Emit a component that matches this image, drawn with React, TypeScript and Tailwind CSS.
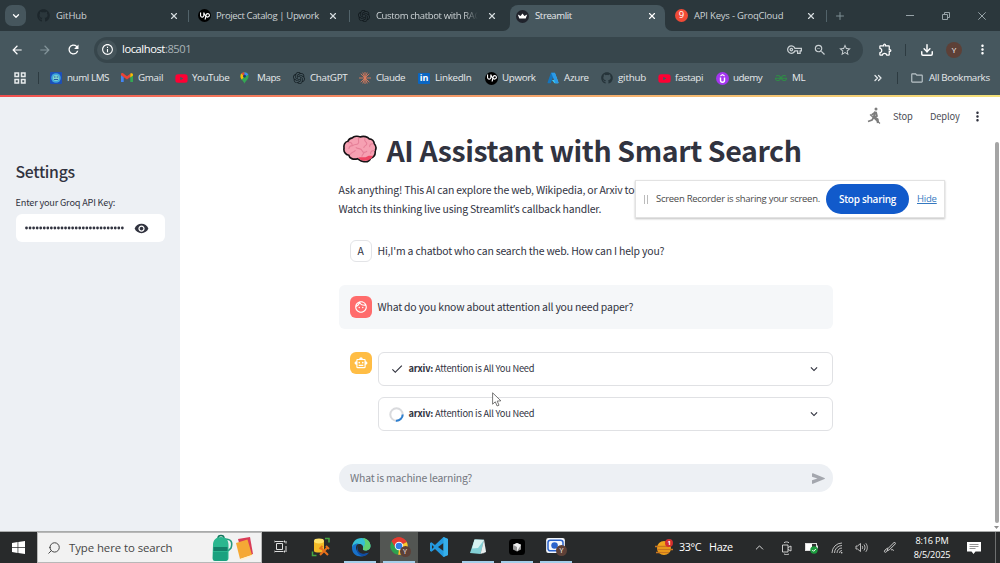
import type { ReactNode } from "react";
import { FaGithub, FaYoutube } from "react-icons/fa";
import {
  MdArrowBack,
  MdArrowForward,
  MdCheck,
  MdExpandMore,
  MdMoreVert,
  MdOutlineExtension,
  MdOutlineFace,
  MdOutlineFolder,
  MdOutlineInfo,
  MdOutlineSmartToy,
  MdOutlineVpnKey,
  MdRefresh,
  MdStarBorder,
  MdVisibility,
  MdZoomOut,
} from "react-icons/md";
import { SiGeeksforgeeks, SiOpenai, SiUpwork } from "react-icons/si";
import { ChevronDown, ChevronUp, ChevronsRight, Download, Plus, Search, X } from "lucide-react";

function UpworkIcon() {
  return (
    <span className="flex size-[13px] items-center justify-center rounded-full bg-black text-white">
      <SiUpwork size={10} />
    </span>
  );
}

function LinkedInIcon() {
  return (
    <span className="flex h-[11px] w-3 items-center justify-center rounded-[1px] bg-[#0a66c2] text-[9px] leading-none font-bold tracking-[-0.2px] text-white">
      <span className="-mt-px">in</span>
    </span>
  );
}

function StreamlitIcon() {
  return (
    <svg viewBox="0 0 13 13" className="size-[13px]">
      <circle cx="6.5" cy="6.5" r="6.5" fill="#20232c" />
      <path d="M1.8 4.6 4.6 6.1 6.5 3.4 8.4 6.1 11.2 4.6 9.7 8.6H3.3Z" fill="#fff" />
    </svg>
  );
}

function GroqIcon() {
  return (
    <span className="flex size-[13px] items-center justify-center rounded-full bg-[#f04a36] text-[9.500px] leading-none text-white">
      <span className="-mt-px">9</span>
    </span>
  );
}

function NumlIcon() {
  return (
    <svg viewBox="0 0 12 12" className="size-3">
      <rect width="12" height="12" rx="1" fill="#1d4fb8" />
      <circle cx="6" cy="6" r="4.8" fill="#3fa6dc" />
      <circle cx="6" cy="6" r="3" fill="#7fd3cf" />
      <path d="M4 5h1.5M6.7 5h1.5M4 7.5h4" stroke="#1c4c9c" strokeWidth="0.9" />
    </svg>
  );
}

function GmailIcon() {
  return (
    <svg viewBox="0 0 12 10" className="h-[10px] w-3">
      <path d="M0 1.5V9h2.7V4.2Z" fill="#4285f4" />
      <path d="M12 1.5V9H9.3V4.2Z" fill="#34a853" />
      <path d="M0 1.4C0 .2 1.4-.3 2.4.5L6 3.3 9.6.5v3.3L6 6.6 0 2.2Z" fill="#ea4335" />
      <path d="M9.4.6c1-.9 2.6-.3 2.6 1V2.4L9.3 4.4Z" fill="#fbbc04" />
    </svg>
  );
}

function MapsIcon() {
  return (
    <svg viewBox="0 0 10 13" className="h-3 w-[9px]">
      <path d="M5 13C4.3 10 .5 8.300.5 4.600A4.500 4.500 0 0 1 5 0a4.500 4.500 0 0 1 4.500 4.600C9.500 8.300 5.700 10 5 13Z" fill="#34a853" />
      <path d="M.5 4.600A4.500 4.500 0 0 1 1.600 1.600L5 4.600 2 8.200C1.100 7.200.5 6 .5 4.600Z" fill="#fbbc04" />
      <path d="M1.600 1.600A4.500 4.500 0 0 1 5 0L5 4.600Z" fill="#ea4335" />
      <path d="M5 0a4.500 4.500 0 0 1 4.300 3L5 5Z" fill="#4285f4" />
      <circle cx="5" cy="4.500" r="1.600" fill="#1f3f72" />
    </svg>
  );
}

function ClaudeIcon() {
  return (
    <svg viewBox="0 0 12 12" className="size-3" stroke="#dc7a5c" strokeWidth="0.900" strokeLinecap="round">
      <path d="M6 .4v11.200M.4 6h11.200M2 2l8 8M10 2l-8 8M3.900.9l4.200 10.200M8.100.9 3.900 11.100" />
    </svg>
  );
}

function AzureIcon() {
  return (
    <svg viewBox="0 0 12 12" className="size-3">
      <path d="M4 .8h3.600L3.800 11.200H1.200C.7 11.200.4 10.700.600 10.200Z" fill="#1475bd" />
      <path d="M7.800.8 11.400 10.200c.2.500-.1 1-.6 1H7.600L4.900 8h3Z" fill="#3ccbf4" />
      <path d="M4.200.8h3.700l3.500 9.400c.2.500-.1 1-.6 1H8.300Z" fill="#2b9ae8" />
    </svg>
  );
}

function UdemyIcon() {
  return (
    <svg viewBox="0 0 13 13" className="size-[13px]" fill="none" stroke="#fff">
      <circle cx="6.500" cy="6.500" r="6.500" fill="#a435f0" stroke="none" />
      <path d="M4.400 4 6.500 2.600 8.600 4" strokeWidth="1.100" />
      <path d="M4.500 5.400v2.900a2 2 0 0 0 4 0V5.400" strokeWidth="1.400" />
    </svg>
  );
}

function TabClose({ active = false }: { active?: boolean }) {
  return <X size={10} strokeWidth={2.800} className={active ? "text-white" : "text-[#d5dbde]"} />;
}

function Tab({ width, icon, title, titleClass = "" }: { width: string; icon: ReactNode; title: string; titleClass?: string }) {
  return (
    <div className={`flex h-full shrink-0 items-center ${width}`}>
      <span className="flex w-[19px] shrink-0 items-center">{icon}</span>
      <span className={`flex-1 pt-px whitespace-nowrap text-[#cdd3d6] ${titleClass}`}>{title}</span>
      <TabClose />
    </div>
  );
}

function TabStrip() {
  return (
    <div className="flex h-[31px] items-center bg-[#2b373c] text-[9.5px]">
      <button className="ml-[5px] flex size-[21px] shrink-0 items-center justify-center rounded-[7px] bg-[#46565d] text-white">
        <ChevronDown size={10} strokeWidth={3} />
      </button>
      <div className="w-[11px] shrink-0" />
      <Tab width="w-[142px]" icon={<FaGithub size={13} className="text-[#1d272c]" />} title="GitHub" titleClass="tracking-[-0.1px]" />
      <div className="mx-[9px] h-3 w-px shrink-0 bg-[#52636a]" />
      <Tab width="w-[140px]" icon={<UpworkIcon />} title="Project Catalog | Upwork" titleClass="-ml-px tracking-[-0.36px]" />
      <div className="mr-2 ml-[11px] h-3 w-px shrink-0 bg-[#52636a]" />
      <Tab
        width="w-[139px]"
        icon={<SiOpenai size={12} className="text-[#11191d]" />}
        title="Custom chatbot with RAG"
        titleClass="-ml-px mr-[5px] tracking-[-0.36px] [mask-image:linear-gradient(to_right,black_83%,transparent_96%)]"
      />
      <div className="relative ml-[13px] flex h-[26px] w-[155px] shrink-0 items-center self-end rounded-t-[8px] bg-[#46575e] pr-[8px] pb-[4px] pl-[6px]">
        <svg viewBox="0 0 7 7" className="absolute bottom-0 -left-[7px] size-[7px]" fill="#46575e">
          <path d="M7 0v7H0A7 7 0 0 0 7 0Z" />
        </svg>
        <svg viewBox="0 0 7 7" className="absolute -right-[7px] bottom-0 size-[7px]" fill="#46575e">
          <path d="M0 0v7h7A7 7 0 0 1 0 0Z" />
        </svg>
        <span className="flex w-[19px] items-center">
          <StreamlitIcon />
        </span>
        <span className="flex-1 pt-px tracking-[-0.36px] text-[#e6eaec]">Streamlit</span>
        <TabClose active />
      </div>
      <div className="w-[10px] shrink-0" />
      <Tab width="w-[141px]" icon={<GroqIcon />} title="API Keys - GroqCloud" titleClass="tracking-[-0.2px]" />
      <div className="ml-[10px] h-3 w-px shrink-0 bg-[#52636a]" />
      <Plus size={12} strokeWidth={1.9} className="ml-[7px] text-[#84939a]" />
      <div className="ml-auto flex items-center gap-[28px] pr-[14px] text-[#97a3a8]">
        <span className="h-px w-2 bg-[#97a3a8]" />
        <svg viewBox="0 0 8 8" className="size-2" fill="none" stroke="currentColor">
          <path d="M.5 2.500h5v5h-5zM2.500 2V.5h5v5H6" />
        </svg>
        <svg viewBox="0 0 8 8" className="size-2" stroke="currentColor">
          <path d="m.3.300 7.400 7.400M7.700.300.300 7.700" />
        </svg>
      </div>
    </div>
  );
}

function Toolbar() {
  return (
    <div className="flex h-[33px] items-center bg-[#46575e] pt-1 text-white">
      <MdArrowBack size={14} className="ml-[10px]" />
      <MdArrowForward size={14} className="ml-[14px] text-[#84959b]" />
      <MdRefresh size={15} className="ml-[14px]" />
      <div className="ml-[13px] flex h-[26px] w-[769px] items-center rounded-full bg-[#37464c] pr-[11px] pl-[3px]">
        <span className="flex size-5 items-center justify-center rounded-full bg-[#45545a]">
          <MdOutlineInfo size={13} />
        </span>
        <span className="ml-[5px] text-[11.200px] tracking-[-0.440px]">
          localhost<span className="text-[#a9b3b7]">:8501</span>
        </span>
        <MdOutlineVpnKey size={15} className="ml-auto text-[#c9d0d3]" />
        <MdZoomOut size={14} className="ml-[11px] text-[#c9d0d3]" />
        <MdStarBorder size={14} className="ml-[11px] text-[#c9d0d3]" />
      </div>
      <MdOutlineExtension size={15} className="ml-[15px]" />
      <div className="ml-[12px] h-3 w-px bg-[#2d3b41]" />
      <Download size={14} strokeWidth={2.500} className="ml-[14px]" />
      <span className="ml-[12px] flex size-4 items-center justify-center rounded-full bg-[#5d4037] text-[8px]">Y</span>
      <MdMoreVert size={15} className="ml-[13px]" />
    </div>
  );
}

const bookmarks: { width: string; icon: ReactNode; label: string; tracking: string }[] = [
  { width: "w-[71px]", icon: <NumlIcon />, label: "numl LMS", tracking: "tracking-[-0.42px]" },
  { width: "w-[54px]", icon: <GmailIcon />, label: "Gmail", tracking: "tracking-[-0.3px]" },
  { width: "w-[65px]", icon: <FaYoutube size={13} className="text-[#ff0033]" />, label: "YouTube", tracking: "tracking-[-0.44px]" },
  { width: "w-[53px]", icon: <MapsIcon />, label: "Maps", tracking: "tracking-[-0.4px]" },
  { width: "w-[66px]", icon: <SiOpenai size={12} className="text-[#152025]" />, label: "ChatGPT", tracking: "tracking-[-0.32px]" },
  { width: "w-[59px]", icon: <ClaudeIcon />, label: "Claude", tracking: "tracking-[-0.4px]" },
  { width: "w-[67px]", icon: <LinkedInIcon />, label: "LinkedIn", tracking: "tracking-[-0.32px]" },
  { width: "w-[62px]", icon: <UpworkIcon />, label: "Upwork", tracking: "tracking-[-0.35px]" },
  { width: "w-[54px]", icon: <AzureIcon />, label: "Azure", tracking: "tracking-[-0.3px]" },
  { width: "w-[57px]", icon: <FaGithub size={12} className="text-[#26343a]" />, label: "github", tracking: "tracking-[-0.2px]" },
  { width: "w-[58px]", icon: <FaYoutube size={13} className="text-[#ff0033]" />, label: "fastapi", tracking: "tracking-[-0.4px]" },
  { width: "w-[59px]", icon: <UdemyIcon />, label: "udemy", tracking: "tracking-[-0.45px]" },
  { width: "w-[40px]", icon: <SiGeeksforgeeks size={12} className="text-[#2f8d46]" />, label: "ML", tracking: "tracking-[-0.3px]" },
];

function BookmarksBar() {
  return (
    <div className="flex h-[31px] items-center bg-[#46575e] pb-[3px] text-[9.800px] text-[#e6eaec]">
      <svg viewBox="0 0 12 12" className="ml-[14px] size-3 shrink-0" fill="none" stroke="currentColor" strokeWidth="1.500">
        <path d="M1 1h3.500v3.500H1zM7.500 1H11v3.500H7.500zM1 7.500h3.500V11H1zM7.500 7.500H11V11H7.500z" />
      </svg>
      <div className="mr-[11px] ml-3 h-3 w-px shrink-0 bg-[#2d3b41]" />
      {bookmarks.map((b) => (
        <div key={b.label} className={`flex shrink-0 items-center ${b.width}`}>
          <span className="flex w-[17px] shrink-0 items-center">{b.icon}</span>
          <span className={`whitespace-nowrap ${b.tracking}`}>{b.label}</span>
        </div>
      ))}
      <ChevronsRight size={12} strokeWidth={2.500} className="ml-auto" />
      <div className="ml-[13px] h-3 w-px bg-[#2d3b41]" />
      <MdOutlineFolder size={14} className="mr-[5px] ml-3 text-[#b9c4c8]" />
      <span className="mr-[11px] w-[60px] tracking-[-0.35px] whitespace-nowrap">All Bookmarks</span>
    </div>
  );
}

function Sidebar() {
  return (
    <aside className="w-[180px] shrink-0 bg-[#edf0f4] px-[15.500px] pt-[62px]">
      <h2 className="h-[26px] text-[15.800px] leading-[26px] font-medium tracking-[-0.3px]">Settings</h2>
      <p className="mt-[10px] text-[9.200px] leading-[14px] tracking-[-0.19px] whitespace-nowrap">Enter your Groq API Key:</p>
      <div className="mt-[5px] flex h-[28px] w-[149px] items-center rounded-[6px] bg-white pl-[9px]">
        <svg viewBox="0 0 99 4" className="h-1 w-[99px]">
          {Array.from({ length: 28 }, (_, i) => (
            <circle key={i} cx={1.500 + i * 3.550} cy="2" r="1.400" fill="#31333f" />
          ))}
        </svg>
        <MdVisibility size={15} className="ml-[10px]" />
      </div>
    </aside>
  );
}

function Brain() {
  return (
    <svg viewBox="0 0 36 30" className="mb-px h-[29px] w-9 shrink-0">
      <path
        d="M10 3C12 1 16 .8 18 2c4-1.500 8 0 9.500 2 3 0 5 2.500 5.300 5 1.800 2 2.200 5 .9 7.500.5 4-1.700 6.500-4.700 7.500-1 3-4 4-7 3.600-3-.2-5-2-6.500-3.100C11 26 7 24 6.500 21 3 20.500.7 17 1.500 13.500.9 10 2.500 7 5.500 6.500 6.200 4.500 8 3.300 10 3Z"
        fill="#f6a0b2"
        stroke="#161114"
        strokeWidth="1.700"
      />
      <path d="M16 23.500c4-1 7 .5 10-1.500 2-1.200 4 0 5.500-.5-1 3-4 4.800-7.500 5-3.500.2-6-1-8-3Z" fill="#ef4664" />
      <path
        d="M17 3c-2 2 1 4-1 6-1.500 1.500-4 0-5.500 2M6 8c2-1 4 0 4 3-1.500 0-3 1-3.500 3M14 13c2 2 5 0 6 3s4 2 5 1M23 4c-1 3 2 3 2 5s-3 2-3 4M31 9c-2 0-3 1-3 3M8 20c1-3 4-2 5-4M33 16c-2 0-4 1-4 3M20 22c0-2 2-2 2-4"
        fill="none"
        stroke="#e57f98"
        strokeWidth="1.100"
        strokeLinecap="round"
      />
    </svg>
  );
}

function AppHeader() {
  return (
    <div className="flex h-[38px] items-center justify-end pr-[15px] text-[9.300px] tracking-[-0.1px] text-[#4a4c55]">
      <svg viewBox="0 0 14 18" className="mr-[12px] h-[18px] w-[14px]" fill="none" stroke="#7d7d7d" strokeWidth="1.700">
        <circle cx="9" cy="2" r="1.500" fill="#7d7d7d" stroke="none" />
        <path d="M8.300 4.500 7 10l3.500 2.500L11 16" strokeWidth="2.300" />
        <path d="M7 10 5 13 1 14.500M8 5.500 4.500 8M9 5l1 4-4 2" />
        <path d="m3 7.500 10 9" strokeWidth="1.200" />
      </svg>
      <span className="w-[37px] pt-px">Stop</span>
      <span className="w-[40px] pt-px">Deploy</span>
      <MdMoreVert size={15} className="text-[#31333f]" />
    </div>
  );
}

function Expander({ icon }: { icon: ReactNode }) {
  return (
    <div className="flex h-[34px] items-center rounded-[6px] border border-[#e0e1e4] pr-[11px] pl-[10px] text-[9.300px]">
      <span className="flex w-5 items-center">{icon}</span>
      <span className="tracking-[-0.230px]">
        <b>arxiv:</b> Attention is All You Need
      </span>
      <MdExpandMore size={14} className="ml-auto" />
    </div>
  );
}

function Spinner() {
  return (
    <svg viewBox="0 0 15 15" className="size-[15px]" fill="none" strokeWidth="2">
      <circle cx="7.500" cy="7.500" r="6.200" stroke="#d9dadd" />
      <path d="M13.700 7.500A6.200 6.200 0 0 1 6.900 13.700" stroke="#2d7fd0" />
    </svg>
  );
}

function Chat() {
  return (
    <main className="relative flex-1 bg-white">
      <AppHeader />
      <div className="ml-[158.500px] w-[494.500px] text-[10.450px] tracking-[-0.185px]">
        <h1 className="-mt-px flex h-8 items-center gap-[9px] pl-[3px] text-[28.500px] leading-8 font-bold tracking-[-0.410px] whitespace-nowrap">
          <Brain />
          <span>AI Assistant with Smart Search</span>
        </h1>
        <p className="mt-[15px] leading-[18.500px] whitespace-nowrap">
          Ask anything! This AI can explore the web, Wikipedia, or Arxiv to answer.
          <br />
          Watch its thinking live using Streamlit<span className="font-['Noto_Sans',sans-serif]">’</span>s callback handler.
        </p>
        <div className="mt-[22px] flex h-[22px] items-center gap-[6px] pl-[11px]">
          <span className="flex size-[22px] items-center justify-center rounded-[6px] border border-[#e3e4e7]">A</span>
          <span>Hi,I'm a chatbot who can search the web. How can I help you?</span>
        </div>
        <div className="mt-[23px] flex h-11 items-center gap-[6px] rounded-[6px] bg-[#f5f7f9] pl-[11px]">
          <span className="flex size-[22px] items-center justify-center rounded-[6px] bg-[#ff6c6c] text-white">
            <MdOutlineFace size={14} />
          </span>
          <span>What do you know about attention all you need paper?</span>
        </div>
        <div className="mt-[23px] flex gap-[6px] pl-[11px]">
          <span className="flex size-[22px] shrink-0 items-center justify-center rounded-[6px] bg-[#ffbd45] text-white">
            <MdOutlineSmartToy size={14} />
          </span>
          <div className="flex flex-1 flex-col gap-[11px]">
            <Expander icon={<MdCheck size={14} className="ml-px" />} />
            <Expander icon={<Spinner />} />
          </div>
        </div>
        <div className="mt-[33px] flex h-7 items-center justify-between rounded-full bg-[#edf0f4] pr-[8px] pl-[11.500px] text-[#747780]">
          <span>What is machine learning?</span>
          <svg viewBox="0 0 13 11" className="h-[11px] w-[13px]" fill="#a4a7ae">
            <path d="M0 .8C0 .2.500 0 1 .2l11.500 4.700c.6.300.6.900 0 1.200L1 10.800c-.5.200-1 0-1-.6V7.200l5.500-1.700L0 3.800Z" />
          </svg>
        </div>
      </div>

      <div className="absolute top-[45px] right-0 flex h-[390px] w-[7px] flex-col items-center">
        <div className="h-[381px] w-[4px] rounded-full bg-[#a5a5a5]" />
        <svg viewBox="0 0 5 3" className="mt-[3px] h-[3px] w-[5px]" fill="#8e8e8e">
          <path d="M0 0h5L2.500 3Z" />
        </svg>
      </div>

      <div className="absolute top-[83px] left-[455px] flex h-[38px] w-[310px] items-center border border-[#e2e2e2] bg-white pl-2 font-['Open_Sans',sans-serif] text-[9.500px] text-[#4a4a4a] shadow-[0_1px_2px_rgba(0,0,0,0.25)]">
        <span className="flex gap-[2px]">
          <span className="h-[9px] w-px bg-[#bbb]" />
          <span className="h-[9px] w-px bg-[#bbb]" />
        </span>
        <span className="ml-2 w-[170px] tracking-[-0.280px] whitespace-nowrap">Screen Recorder is sharing your screen.</span>
        <button className="flex h-[30px] w-[83px] shrink-0 items-center justify-center rounded-full bg-[#115acb] text-[10px] font-semibold tracking-[-0.270px] whitespace-nowrap text-white">
          Stop sharing
        </button>
        <span className="ml-[8px] tracking-[-0.200px] text-[#3478c0] underline">Hide</span>
      </div>

      <svg viewBox="0 0 10 15" className="absolute top-[295px] left-[312px] h-[15px] w-[10px]">
        <path d="M.6.800v11.400l2.700-2.400 1.800 4.200 1.900-.8-1.800-4.100 3.700-.3Z" fill="#fff" stroke="#555" strokeWidth="0.800" />
      </svg>
    </main>
  );
}

function Backpack() {
  return (
    <svg viewBox="0 0 44 28" className="h-[28px] w-[44px] shrink-0">
      <path d="M15 5c6 0 8 3 6 9l-3 3" fill="none" stroke="#259a7c" strokeWidth="1.600" />
      <path d="M8 4c0-3.500 6-3.500 6 0" fill="none" stroke="#12765c" strokeWidth="1.500" />
      <path d="M3 11c0-5 3-8 8-8s7.500 3 7.500 8v13c0 2-1 3-3 3h-10c-2 0-3-1-3-3Z" fill="#2bb78f" />
      <path d="M3.500 13h14v4h-14z" fill="#147f68" />
      <path d="M3 18h14.500v7c0 1-1 2-2 2h-10c-1.500 0-2.500-1-2.500-2Z" fill="#1ba17f" />
      <path d="m28 5 12-2 3 17-10 3Z" fill="#d93c58" />
      <path d="m26 9 11.500-3.500 4.500 15.500-12 4Z" fill="#f5a935" />
      <path d="m30 25 12-4v1.500l-11 4Z" fill="#fff1cf" />
    </svg>
  );
}

function YBadge() {
  return (
    <span className="absolute -right-px bottom-0 flex size-[11px] items-center justify-center rounded-full bg-[#5d4037] text-[7px] leading-none text-white">Y</span>
  );
}

function TaskButton({ children, width, running = false, active = false }: { children: ReactNode; width: string; running?: boolean; active?: boolean }) {
  return (
    <div className={`flex h-full shrink-0 flex-col items-center ${width} ${active ? "bg-[#535653]" : ""}`}>
      <span className="flex flex-1 items-center">{children}</span>
      <span className={`h-[2px] w-8 ${running ? "bg-[#a5cfea]" : ""}`} />
    </div>
  );
}

function Taskbar() {
  return (
    <div className="flex h-8 shrink-0 items-center border-t border-[#a9abab] bg-[#282a2b] font-['Open_Sans',sans-serif] text-white">
      <div className="flex h-full w-[37px] shrink-0 items-center justify-center">
        <svg viewBox="0 0 13 13" className="size-[13px]" fill="#fff">
          <path d="M0 1.900 5.600 1.100v5H0zM6.300 1 13 0v6.100H6.300zM0 6.800h5.600v5.100L0 11.100zM6.300 6.800H13V13l-6.700-1z" />
        </svg>
      </div>
      <div className="flex h-full w-[225px] shrink-0 items-center border border-[#b8b8b8] bg-[#f2f2f2] pl-[9px] text-[#454545]">
        <Search size={14} strokeWidth={1.700} className="shrink-0 -scale-x-100" />
        <span className="ml-[8px] w-[141px] text-[11.400px] tracking-[-0.070px] whitespace-nowrap">Type here to search</span>
        <Backpack />
      </div>
      <TaskButton width="w-[38px]">
        <svg viewBox="0 0 14 13" className="h-[13px] w-[14px]" fill="none" stroke="#ddd">
          <path d="M1 1.500h8.500M1 11.500h8.500M2.500 3.500h6v6h-6zM12 1v2.500M12 6v6M0 .5v2M10.500 .5v2M0 10.500v2M10.500 10.500v2" />
        </svg>
      </TaskButton>
      <TaskButton width="w-[41px]">
        <svg viewBox="0 0 20 20" className="size-5" fill="none">
          <path d="M14 1.500h4v4M5.500 18.500h-4v-4" stroke="#45a643" strokeWidth="1.500" />
          <path d="M3 4v10c0 2 10 2 10 0V4" fill="#f3bb27" />
          <ellipse cx="8" cy="4" rx="5" ry="2.400" fill="#ffe26a" />
          <path d="m9 18 8-8M10 11l7 7M8.500 12l3-3M15 9l3 3" stroke="#e8701b" strokeWidth="2" />
        </svg>
      </TaskButton>
      <TaskButton width="w-[38px]" running>
        <svg viewBox="0 0 20 20" className="ml-px size-5">
          <path d="M1 11C1 5 5 1 10.500 1 16 1 19.500 5 19.500 9c0 3-2.500 4.500-5 4.500-2 0-3-.8-2.500-2 .5-2-.5-4.500-3.500-4.500C5 7 2 8.500 1 11Z" fill="#36bfd5" />
          <path d="M12 1c4.500.5 7.500 4 7.500 8 0 3-2.500 4.500-5 4.500-2 0-3-.8-2.500-2C13 9 16 6 12 1Z" fill="#61d071" />
          <path d="M1 11c0-3.500 4-5 7-4.500-3 1-3.500 4-2.500 6.500 1 3 4 4.500 7.500 4l4-1C15 18.500 12.500 19.500 10 19.500 5 19.500 1 16 1 11Z" fill="#1871c9" />
          <path d="M8 8c-3 3-1 8 3.500 8.700 2 .3 4.500-.2 6.500-1.500-1 2.500-4 4-6.500 4C6.500 18 3.500 12 8 8Z" fill="#0f4da5" />
        </svg>
      </TaskButton>
      <div className="w-px" />
      <TaskButton width="w-[38px]" running active>
        <span className="relative ml-px flex size-5">
          <svg viewBox="0 0 20 20" className="size-[18px]">
            <path d="M10 10 1.800 4.800A9.800 9.800 0 0 1 18.600 5.500Z" fill="#e63c31" />
            <path d="M10 10 18.600 5.500A9.800 9.800 0 0 1 9 19.700Z" fill="#fcc72e" />
            <path d="M10 10 9 19.700A9.800 9.800 0 0 1 1.800 4.800Z" fill="#2da14f" />
            <path d="M10 5.500h8.600A9.800 9.800 0 0 0 1.800 4.800L6 12Z" fill="#e63c31" />
            <circle cx="10" cy="10" r="4.700" fill="#fff" />
            <circle cx="10" cy="10" r="3.700" fill="#327de5" />
          </svg>
          <YBadge />
        </span>
      </TaskButton>
      <TaskButton width="w-[41px]">
        <svg viewBox="0 0 20 20" className="size-5">
          <path d="M14.500 0 6 8 2.500 5.300 1 6v8l1.500.7L6 12l8.500 8 4.500-2V2ZM3 12V8l2 2Zm11.500 2L9 10l5.500-4Z" fill="#2499df" />
          <path d="M14.500 0 19 2v16l-4.500 2Z" fill="#36afea" />
        </svg>
      </TaskButton>
      <TaskButton width="w-[38px]" running>
        <svg viewBox="0 0 18 18" className="size-[18px]">
          <path d="M6 1h9l2 13-3 2Z" fill="#5c6b70" />
          <path d="M5.500 1.500 15 2 11.500 16 1 15Z" fill="#83d0d5" />
          <path d="M5.500 1.500 15 2 9 10 3 10.500Z" fill="#d7f2f1" />
          <path d="M11.500 16 15 2l2 12Z" fill="#e9eeee" />
        </svg>
      </TaskButton>
      <TaskButton width="w-[40px]" running>
        <svg viewBox="0 0 16 16" className="size-4">
          <rect width="16" height="16" rx="3.500" fill="#000" />
          <path d="m8 4 4 1.800v4.700L8 12.500l-4-2V5.800Z" fill="#999" />
          <path d="M4 5.800 8 4l4 1.800-4 6.700V8Z" fill="#eee" />
        </svg>
      </TaskButton>
      <TaskButton width="w-[38px]" running>
        <span className="relative flex h-[18px] w-5 items-start">
          <svg viewBox="0 0 20 16" className="h-[15px] w-[19px]">
            <rect width="20" height="16" rx="2.500" fill="#f4f7fc" />
            <rect x="2" y="2.300" width="16" height="11.400" rx="2.500" fill="none" stroke="#2b63cc" strokeWidth="1.600" />
            <circle cx="9" cy="8" r="3.500" fill="#2b63cc" />
          </svg>
          <YBadge />
        </span>
      </TaskButton>
      <div className="ml-[80px] flex shrink-0 items-center">
        <span className="relative flex">
          <svg viewBox="0 0 18 17" className="h-[17px] w-[18px]">
            <circle cx="9" cy="9" r="7" fill="#f2a51b" />
            <path d="M0 7.500h14M2 10.500h16M1 13.500h13" stroke="#c9761f" strokeWidth="1.300" />
            <circle cx="14" cy="4" r="4" fill="#d32f2f" />
          </svg>
          <span className="absolute top-0 right-[2px] text-[6px] leading-[8px] font-bold">1</span>
        </span>
        <span className="ml-[6px] w-[30px] text-[10.800px] tracking-[-0.400px] whitespace-nowrap">33°C</span>
        <span className="w-[44px] text-[10.800px] tracking-[-0.300px]">Haze</span>
        <ChevronUp size={13} strokeWidth={1.500} />
        <svg viewBox="0 0 12 14" className="ml-[15px] h-[14px] w-3" fill="none" stroke="#ddd" strokeWidth="0.900">
          <path d="M1.500 4h5.500v7H1.500zM7 6.500l3-1.500v5l-3-1.500M3 1.700c1.500-1 3.500-1 5 0M3 13c1.500.7 3.500.7 5 0" />
        </svg>
        <svg viewBox="0 0 14 12" className="ml-[12px] h-3 w-[14px]">
          <rect x=".5" y="1.500" width="11" height="7" fill="#333" stroke="#ddd" />
          <rect x="1" y="2" width="6" height="6" fill="#fff" />
          <rect x="12" y="3.500" width="1" height="3" fill="#ddd" />
          <circle cx="9" cy="8" r="3.700" fill="#1c9c3e" />
          <path d="m7.300 8 1.300 1.300 2.200-2.300" fill="none" stroke="#fff" />
        </svg>
        <svg viewBox="0 0 12 12" className="ml-3 size-3" fill="none" stroke="#bbb">
          <path d="M1 11A10 10 0 0 1 11 1M3.500 11A7.500 7.500 0 0 1 11 3.500M6 11a5 5 0 0 1 5-5M8.500 11a2.500 2.500 0 0 1 2.500-2.500" />
          <circle cx="10.700" cy="10.700" r=".8" fill="#ddd" stroke="none" />
        </svg>
        <svg viewBox="0 0 13 11" className="ml-3 h-[11px] w-[13px]" fill="none" stroke="#ccc" strokeWidth="0.900">
          <path d="M1 4h1.500L5.500 1.500v8L2.500 7H1zM7.200 4c.6 1 .6 2 0 3M9 2.500c1.300 2 1.300 4 0 6M10.800 1.300c2 2.500 2 6 0 8.500" />
        </svg>
        <svg viewBox="0 0 13 13" className="ml-[15px] size-[13px]" fill="none" stroke="#ccc">
          <path d="M11.500 1 5 7.500l-1 2.300 2.300-.9L12.500 2.700ZM4 10c-1 2-3 1.500-2.500 0S4 7.500 5 7M8 9c2-1 3 0 2 1" />
        </svg>
        <div className="ml-[14px] flex w-[44px] flex-col items-center text-[9.200px] leading-[14px] tracking-[-0.200px] whitespace-nowrap">
          <span>8:16 PM</span>
          <span>8/5/2025</span>
        </div>
        <svg viewBox="0 0 14 14" className="ml-[13px] size-[14px]">
          <path d="M0 1h14v9.500H8.500L6.500 13l-2-2.500H0Z" fill="#fff" />
          <path d="M2.500 3.500h9M2.500 5.500h9M2.500 7.500h6" stroke="#777" strokeWidth="0.800" />
        </svg>
        <div className="ml-[14px] h-[31px] w-px bg-[#6e7070]" />
      </div>
    </div>
  );
}

export default function App() {
  return (
    <div className="flex h-[563px] w-[1000px] flex-col overflow-hidden bg-white font-['Open_Sans',sans-serif]">
      <TabStrip />
      <Toolbar />
      <BookmarksBar />
      <div className="h-[2px] shrink-0 bg-linear-to-r from-[#f04e4e] via-[#f3a06a] to-[#f4e27a]" />
      <div className="flex min-h-0 flex-1 font-['Noto_Sans_CJK_SC',sans-serif] text-[#31333f]">
        <Sidebar />
        <Chat />
      </div>
      <Taskbar />
    </div>
  );
}
